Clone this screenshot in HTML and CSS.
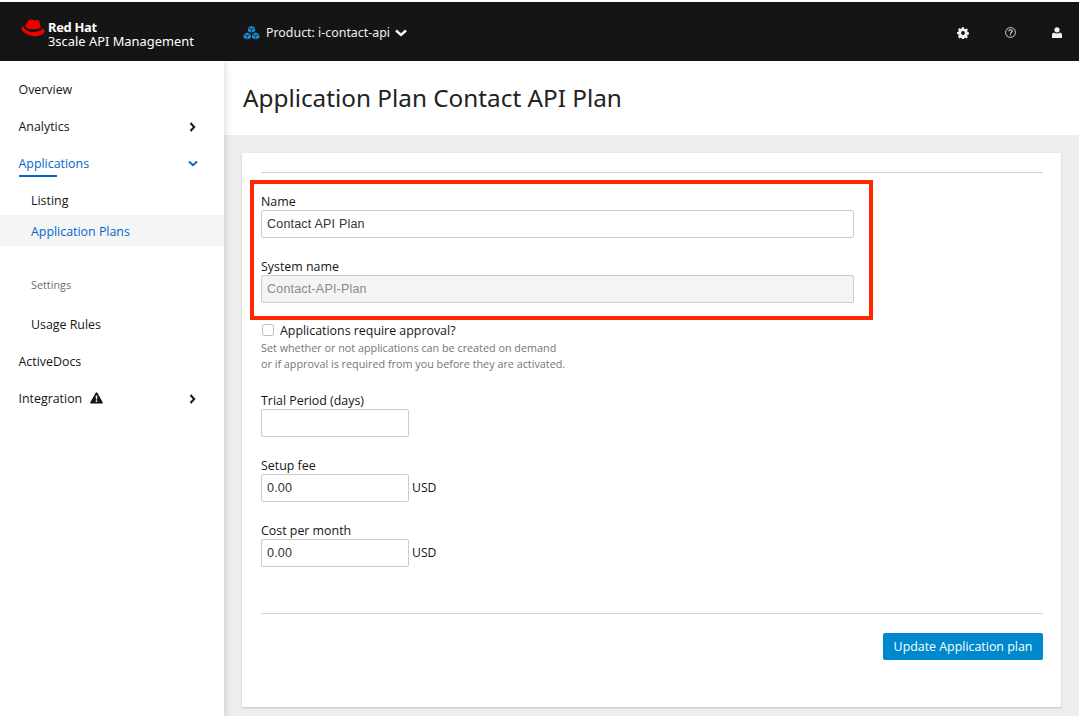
FILE: index.html
```html
<!DOCTYPE html>
<html lang="en">
    <head>
        <meta charset="UTF-8">
        <title>Application Plan Contact API Plan</title>
        <link rel="stylesheet" href="styles.css">
    </head>
    <body>
        <header class="topbar">
            <div class="brand">
                <svg class="brand-hat" width="25" height="20" viewBox="0 0 25 20">
                    <path fill="#e00" d="M7.500 1.200C8.700.3 10.300.4 11.800 1c1.300.5 2.500.6 3.500.2 1.500-.5 2.700.1 3 1.500l1.300 5.600c.3 1.100-7 3.300-12.500 1.700-1.500-.4-3.100-1.100-3.300-1.900-.1-.3 0-.7.200-1z"/>
                    <path fill="#e00" d="M4.300 7.200C2 7.500.4 8.200.4 9.500c0 3.200 6.500 7.700 13.700 7.700 5.500 0 9.600-2.500 9.600-5 0-1-.6-1.800-2.200-2.500l-1.100-.5.300 1.300c-2.200 1.900-7.800 2.800-11.700 1.900-2.900-.7-5-2.200-5-3.200z"/>
                    <path fill="#151515" d="M4 6.600c-.2 1.400 2.400 3 5 3.600 4.100.9 9.300.2 11-1.600l.5 1.700c-2.200 2-7.800 2.700-11.700 1.900-3.100-.7-5.700-2.400-6-4.100-.1-.4.400-1.100 1.200-1.500z"/>
                </svg>
                <div class="brand-text">
                    <strong>Red Hat</strong>
                    <span>3scale API Management</span>
                </div>
            </div>
            <div class="context">
                <svg class="context-cubes" width="17" height="14" viewBox="0 0 17 14">
                    <path fill="#1b8fd6" d="M8.500 0l3.600 1.500v3.700L8.500 6.700 4.900 5.200V1.500z"/>
                    <path fill="#1b8fd6" d="M4.300 6.400l3.600 1.500v4.200L4.300 13.600.7 12.100V7.900z"/>
                    <path fill="#1b8fd6" d="M12.700 6.400l3.600 1.500v4.200l-3.600 1.500-3.600-1.500V7.900z"/>
                    <path fill="none" stroke="#151515" stroke-width=".7" d="M4.900 1.800l3.600 1.500 3.600-1.500M8.500 3.300v3.400M.7 8.200l3.600 1.500 3.600-1.500M4.300 9.700v3.900M9.100 8.200l3.600 1.500 3.600-1.500M12.700 9.700v3.900"/>
                </svg>
                <span class="context-name">Product: i-contact-api</span>
                <svg class="chevron" width="12" height="8" viewBox="0 0 12 8">
                    <path fill="none" stroke="#fff" stroke-width="2.400" d="M1 1.500l5 4.500 5-4.500"/>
                </svg>
            </div>
            <div class="tools">
                <svg width="12" height="12" viewBox="0 0 12 12">
                    <path fill="#f0f0f0" fill-rule="evenodd" d="M5 .3h2l.3 1.500 1 .4 1.300-.8L11 2.800l-.8 1.300.4 1 1.400.3v2l-1.400.3-.4 1-.1.100.8 1.300-1.400 1.400-1.300-.8-1 .4-.3 1.400H5l-.3-1.400-1-.4-1.300.8L1 9.600l.8-1.300-.4-1L0 7V5l1.400-.3.400-1L1 2.400 2.400 1l1.300.8 1-.4zM6 4.100a1.900 1.900 0 1 0 0 3.800 1.900 1.900 0 0 0 0-3.800z"/>
                </svg>
                <svg width="11" height="11" viewBox="0 0 11 11">
                    <circle cx="5.500" cy="5.500" r="4.900" fill="none" stroke="#e8e8e8" stroke-width=".9"/>
                    <path fill="none" stroke="#e8e8e8" stroke-width="1.100" d="M3.800 4.300c0-1 .8-1.600 1.700-1.600s1.700.6 1.700 1.500c0 1.200-1.700 1.200-1.700 2.500"/>
                    <rect x="5" y="7.400" width="1.100" height="1.100" fill="#e8e8e8"/>
                </svg>
                <svg width="10" height="11" viewBox="0 0 10 11">
                    <circle cx="5" cy="2.800" r="2.600" fill="#f0f0f0"/>
                    <path fill="#f0f0f0" d="M1.800 5.600c.8.600 1.900 1 3.200 1s2.400-.4 3.200-1C9.300 6 10 7 10 8v3H0V8c0-1 .7-2 1.800-2.400z"/>
                </svg>
            </div>
        </header>
        <div class="layout">
            <nav class="sidebar">
                <a class="nav-item">Overview</a>
                <a class="nav-item has-arrow">Analytics
                    <svg class="nav-arrow" width="7" height="10" viewBox="0 0 7 10"><path fill="none" stroke="#151515" stroke-width="2" d="M1.500 1l3.700 4-3.700 4"/></svg>
                </a>
                <a class="nav-item has-arrow is-open"><span class="nav-open-label">Applications</span>
                    <svg class="nav-arrow nav-arrow-down" width="10" height="7" viewBox="0 0 10 7"><path fill="none" stroke="#06c" stroke-width="2" d="M1 1.500l4 3.700 4-3.700"/></svg>
                </a>
                <a class="nav-sub">Listing</a>
                <a class="nav-sub is-current">Application Plans</a>
                <div class="nav-heading">Settings</div>
                <a class="nav-sub">Usage Rules</a>
                <a class="nav-item">ActiveDocs</a>
                <a class="nav-item has-arrow"><span>Integration
                    <svg class="nav-warn" width="13" height="12" viewBox="0 0 13 12"><path fill="#151515" fill-rule="evenodd" d="M6.500.3c.3 0 .6.200.8.500l5.400 9.500c.3.600 0 1.300-.8 1.300H1.100c-.8 0-1.100-.7-.8-1.300L5.700.8c.2-.3.500-.5.800-.5zM5.700 3.500l.2 4h1.200l.2-4zM6.500 8.200a.9.900 0 1 0 0 1.800.9.900 0 0 0 0-1.800z"/></svg></span>
                    <svg class="nav-arrow" width="7" height="10" viewBox="0 0 7 10"><path fill="none" stroke="#151515" stroke-width="2" d="M1.500 1l3.700 4-3.700 4"/></svg>
                </a>
            </nav>
            <main class="content">
                <div class="page-head">
                    <h1>Application Plan Contact API Plan</h1>
                </div>
                <div class="page-body">
                    <form class="card">
                        <hr class="rule">
                        <div class="field first-field">
                            <label>Name</label>
                            <input class="text-input" type="text" value="Contact API Plan">
                        </div>
                        <div class="field">
                            <label>System name</label>
                            <input class="text-input is-disabled" type="text" value="Contact-API-Plan" disabled>
                        </div>
                        <div class="check-row">
                            <span class="check-box"></span>
                            <label>Applications require approval?</label>
                        </div>
                        <p class="help">Set whether or not applications can be created on demand<br>or if approval is required from you before they are activated.</p>
                        <div class="field trial-field">
                            <label>Trial Period (days)</label>
                            <input class="text-input short" type="text">
                        </div>
                        <div class="field">
                            <label>Setup fee</label>
                            <div class="money">
                                <input class="text-input short" type="text" value="0.00">
                                <span>USD</span>
                            </div>
                        </div>
                        <div class="field">
                            <label>Cost per month</label>
                            <div class="money">
                                <input class="text-input short" type="text" value="0.00">
                                <span>USD</span>
                            </div>
                        </div>
                        <hr class="rule bottom-rule">
                        <div class="actions">
                            <button class="update-btn" type="button">Update Application plan</button>
                        </div>
                        <div class="callout"></div>
                    </form>
                </div>
            </main>
        </div>
    </body>
</html>
```

FILE: styles.css
```css
*{
    margin:0;
    padding:0;
    box-sizing:border-box;
}
html,body{
    height:716px;
    overflow:hidden;
}
body{
    background:#fff;
    padding-top:2px;
    font-family:"Open Sans","Noto Sans",sans-serif;
    font-size:12.4px;
    color:#151515;
}
.topbar{
    height:59px;
    background:#151515;
    display:flex;
    align-items:center;
    color:#fff;
    padding-left:21px;
}
.brand{
    display:flex;
    align-items:center;
    width:222px;
    padding-top:5px;
}
.brand-hat{
    margin-right:2px;
    margin-top:-11px;
}
.brand-text{
    display:flex;
    flex-direction:column;
    font-family:"Noto Sans",sans-serif;
    font-size:12.9px;
    line-height:14px;
}
.brand-text strong{
    font-weight:700;
    letter-spacing:-0.3px;
}
.context{
    display:flex;
    align-items:center;
    padding-top:2px;
}
.context-name{
    font-family:"Noto Sans",sans-serif;
    font-size:12.4px;
    margin-left:6px;
    color:#f0f0f0;
}
.chevron{
    margin-left:5px;
}
.tools{
    margin-left:auto;
    display:flex;
    align-items:center;
    gap:36px;
    padding:2px 17px 0 0;
}
.layout{
    display:flex;
    height:655px;
}
.sidebar{
    width:224px;
    background:#fff;
    padding-top:10px;
    flex:none;
    box-shadow:2px 0 6px rgba(0,0,0,0.12);
    position:relative;
    z-index:2;
}
.nav-item{
    display:flex;
    align-items:center;
    height:37px;
    padding:0 28px 0 18.500px;
}
.has-arrow{
    justify-content:space-between;
}
.nav-arrow-down{
    margin-right:-2px;
}
.nav-warn{
    margin-left:5px;
    vertical-align:-1px;
}
.is-open{
    color:#06c;
}
.nav-open-label{
    position:relative;
}
.nav-open-label:after{
    content:"";
    position:absolute;
    left:0;
    width:38px;
    bottom:-5px;
    height:2px;
    background:#06c;
}
.nav-sub{
    display:block;
    height:31px;
    line-height:33px;
    padding-left:31px;
}
.nav-item + .nav-sub{
    margin-top:2px;
}
.is-current{
    color:#06c;
    background:#f5f5f5;
}
.nav-heading{
    padding-left:31px;
    margin-top:31px;
    margin-bottom:15px;
    height:16px;
    line-height:16px;
    font-size:10.8px;
    color:#6a6e73;
}
.nav-sub + .nav-item{
    margin-top:4px;
}
.content{
    flex:1;
    display:flex;
    flex-direction:column;
}
.page-head{
    height:74px;
    background:#fff;
    padding:20px 0 0 19px;
}
.page-head h1{
    font-family:"Noto Sans",sans-serif;
    font-weight:400;
    font-size:24.3px;
    line-height:34px;
    color:#222;
}
.page-body{
    flex:1;
    background:#ededed;
    padding:18px 18px 0;
}
.card{
    position:relative;
    height:554px;
    background:#fff;
    padding:19px 18px 0 19px;
    box-shadow:0 1px 2px rgba(0,0,0,0.18);
}
.rule{
    border:0;
    border-top:1px solid #d2d2d2;
}
.field{
    margin-bottom:20px;
}
.first-field{
    margin-top:19px;
}
.field label{
    display:block;
    height:18px;
    line-height:20px;
}
.text-input{
    display:block;
    width:593px;
    height:28px;
    margin-bottom:-1px;
    border:1px solid #ccc;
    border-radius:2px;
    padding:0 5px;
    background:#fff;
    font-family:"Liberation Sans",sans-serif;
    font-size:12.5px;
    letter-spacing:0.2px;
    color:#333;
}
.is-disabled{
    background:#f4f4f4;
    color:#8a8a8a;
}
.short{
    width:148px;
}
.money{
    display:flex;
    align-items:center;
    gap:3px;
    font-size:12.2px;
}
.check-row{
    display:flex;
    align-items:center;
    height:18px;
    margin-top:-2px;
}
.check-box{
    width:12px;
    height:12px;
    margin:0 6px 0 1px;
    border:1px solid #bbb;
    border-radius:3px;
    background:#fff;
}
.help{
    margin-top:1px;
    font-size:10.8px;
    line-height:16px;
    color:#72767b;
}
.trial-field{
    margin-top:19px;
}
.bottom-rule{
    margin-top:47px;
}
.actions{
    display:flex;
    justify-content:flex-end;
    margin-top:19px;
}
.update-btn{
    width:160px;
    height:27px;
    border:0;
    border-radius:2px;
    background:#0088ce;
    color:#fff;
    font-family:"Open Sans",sans-serif;
    font-weight:500;
    font-size:12.4px;
}
.callout{
    position:absolute;
    left:8px;
    top:27px;
    width:623px;
    height:140px;
    border:4px solid #ff2600;
    pointer-events:none;
}
```
